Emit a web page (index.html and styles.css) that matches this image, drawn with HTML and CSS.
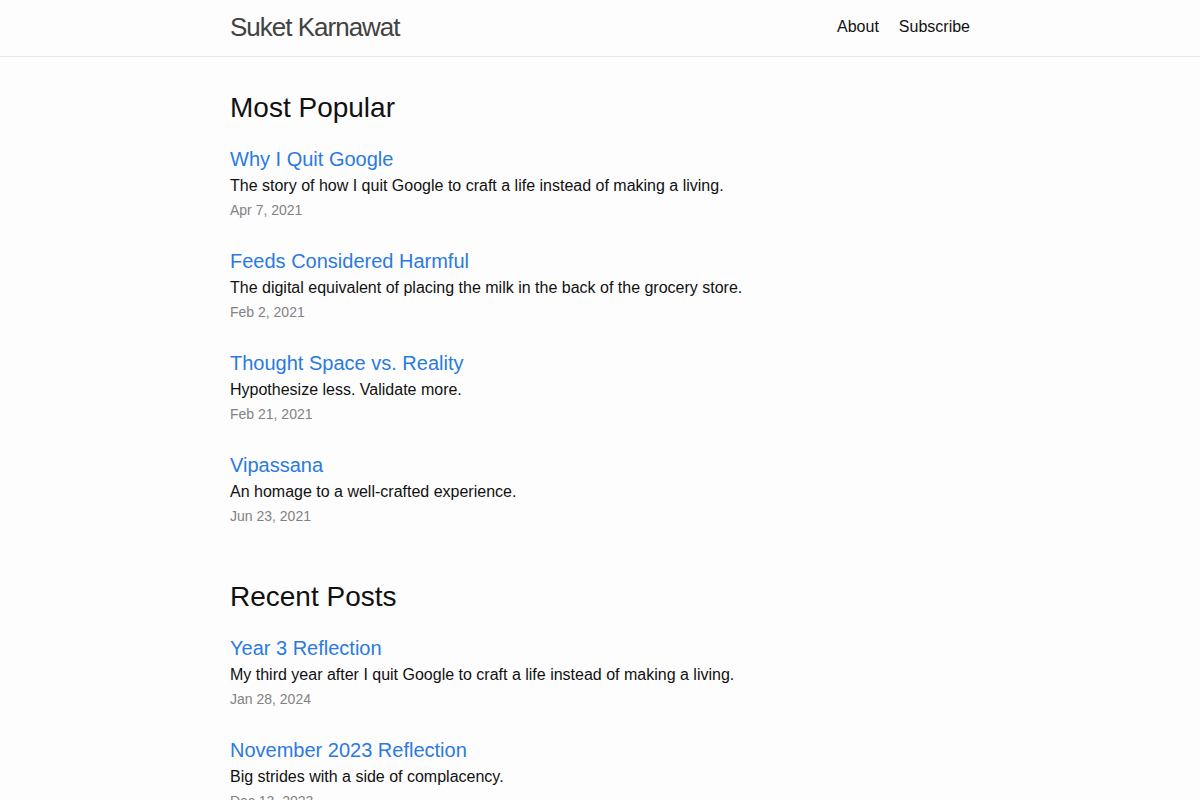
FILE: index.html
```html
<!DOCTYPE html>
<html lang="en">
<head>
    <meta charset="UTF-8">
    <meta name="viewport" content="width=device-width, initial-scale=1.0">
    <title>Suket Karnawat</title>
    <link rel="stylesheet" href="styles.css">
</head>
<body>

    <!-- Header -->
    <header class="site-header">
        <div class="wrapper header-row">
            <a class="site-title" href="#">Suket Karnawat</a>
            <nav class="site-nav">
                <a href="#">About</a>
                <a href="#">Subscribe</a>
            </nav>
        </div>
    </header>

    <!-- Main content -->
    <main class="page-content">
        <div class="wrapper">
            <section class="post-section">
                <h2>Most Popular</h2>
                <ul class="post-list">
                    <li>
                        <a class="post-link" href="#">Why I Quit Google</a>
                        <p class="post-desc">The story of how I quit Google to craft a life instead of making a living.</p>
                        <span class="post-meta">Apr 7, 2021</span>
                    </li>
                    <li>
                        <a class="post-link" href="#">Feeds Considered Harmful</a>
                        <p class="post-desc">The digital equivalent of placing the milk in the back of the grocery store.</p>
                        <span class="post-meta">Feb 2, 2021</span>
                    </li>
                    <li>
                        <a class="post-link" href="#">Thought Space vs. Reality</a>
                        <p class="post-desc">Hypothesize less. Validate more.</p>
                        <span class="post-meta">Feb 21, 2021</span>
                    </li>
                    <li>
                        <a class="post-link" href="#">Vipassana</a>
                        <p class="post-desc">An homage to a well-crafted experience.</p>
                        <span class="post-meta">Jun 23, 2021</span>
                    </li>
                </ul>
            </section>

            <section class="post-section">
                <h2>Recent Posts</h2>
                <ul class="post-list">
                    <li>
                        <a class="post-link" href="#">Year 3 Reflection</a>
                        <p class="post-desc">My third year after I quit Google to craft a life instead of making a living.</p>
                        <span class="post-meta">Jan 28, 2024</span>
                    </li>
                    <li>
                        <a class="post-link" href="#">November 2023 Reflection</a>
                        <p class="post-desc">Big strides with a side of complacency.</p>
                        <span class="post-meta">Dec 13, 2023</span>
                    </li>
                </ul>
            </section>
        </div>
    </main>

</body>
</html>
```

FILE: styles.css
```css
/* Base */
* { margin: 0; padding: 0; box-sizing: border-box; }
body { background: #fdfdfd; color: #111; font-family: "Liberation Sans", Arial, sans-serif; font-size: 16px; line-height: 1.5; }
a { text-decoration: none; }
.wrapper { max-width: 740px; margin: 0 auto; }

/* Header */
.site-header { border-bottom: 1px solid #e8e8e8; }
.header-row { display: flex; justify-content: space-between; align-items: center; height: 56px; padding-bottom: 2px; }
.site-title { font-size: 26px; letter-spacing: -1px; color: #424242; line-height: 54px; }
.site-nav { display: flex; gap: 20px; line-height: 54px; }
.site-nav a { color: #111; }

/* Posts */
.page-content { padding-top: 30px; }
.post-section { padding-bottom: 24px; }
.post-section h2 { font-size: 28px; font-weight: 400; line-height: 42px; margin-bottom: 15px; }
.post-list { list-style: none; }
.post-list li { margin-bottom: 24px; }
.post-link { display: block; font-size: 20px; line-height: 30px; color: #2a7ae2; }
.post-desc { line-height: 24px; }
.post-meta { display: block; font-size: 14px; line-height: 24px; color: #828282; }
```
